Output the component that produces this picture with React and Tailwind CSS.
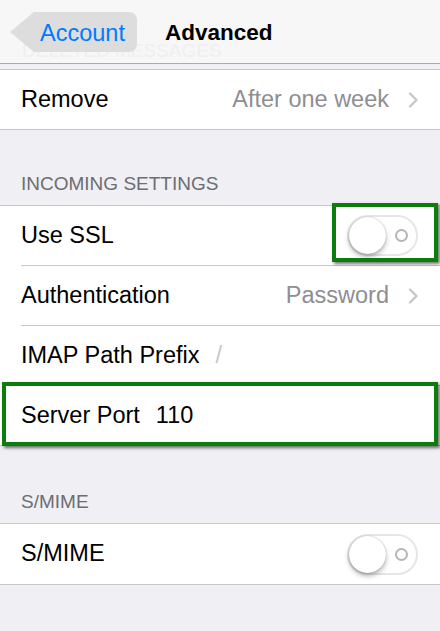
import React from "react";

const Chevron = () => (
  <svg width="10" height="16" viewBox="0 0 10 16" fill="none" className="ml-[19px]">
    <path d="M2 1.5l6.5 6.5L2 14.5" stroke="#c7c7cc" strokeWidth="2.4" strokeLinecap="round" strokeLinejoin="round" />
  </svg>
);

const Toggle = () => (
  <div className="relative w-[71px] h-[41px] rounded-full border-2 border-[#e6e6e6] bg-white">
    <div className="absolute left-0 top-0 w-[37px] h-[37px] rounded-full bg-white shadow-[0_3px_5px_rgba(0,0,0,0.3),0_0_1px_rgba(0,0,0,0.35)]" />
    <div className="absolute right-[8px] top-[12px] w-[13px] h-[13px] rounded-full border-2 border-[#b5b5b5]" />
  </div>
);

const Row = ({ children, last, h = "h-[60px]" }) => (
  <div className={`relative pl-[21px] ${h}`}>
    <div className={`flex items-center h-full pr-[22px] ${last ? "" : "border-b border-[#c8c7cc]"}`}>
      {children}
    </div>
  </div>
);

const Header = ({ children, h }) => (
  <div className={`flex items-end pl-[21px] text-[19px] leading-[22px] text-[#6d6d72] ${h}`}>{children}</div>
);

export default function App() {
  return (
    <div
      className="w-[440px] h-[631px] overflow-hidden bg-[#efeff4] text-[23.5px] text-black"
      style={{ fontFamily: '"Liberation Sans", Arial, sans-serif' }}
    >
      {/* Nav bar */}
      <div className="relative h-[64px] bg-[#f7f7f7] border-b border-[#ababab] overflow-hidden">
        <span className="absolute left-[22px] top-[40px] text-[19px] leading-[22px] text-[#efefef]">DELETED MESSAGES</span>
        <div className="absolute left-[10px] top-[12px] w-[127px] h-[40px]">
          <svg width="127" height="40" viewBox="0 0 127 40" className="absolute inset-0">
            <path d="M0 20L24 0H119a8 8 0 0 1 8 8V32a8 8 0 0 1-8 8H24Z" fill="#dadada" fillOpacity="0.92" />
          </svg>
          <span className="absolute left-[30px] top-[8px] leading-[26px] text-[#007aff]">Account</span>
        </div>
        <span className="absolute left-[165px] top-[20px] text-[22.5px] leading-[26px] font-bold">Advanced</span>
      </div>

      {/* Deleted messages */}
      <div className="mt-[5px] bg-white border-y border-[#c8c7cc]">
        <Row last h="h-[59px]">
          <span>Remove</span>
          <span className="ml-auto text-[#8e8e93]">After one week</span>
          <Chevron />
        </Row>
      </div>

      <Header h="h-[75px] pb-[10px]">INCOMING SETTINGS</Header>

      <div className="bg-white border-y border-[#c8c7cc]">
        <Row>
          <span>Use SSL</span>
          <div className="ml-auto">
            <Toggle />
          </div>
          <div className="absolute right-[2px] top-[-3px] w-[106px] h-[59px] border-4 border-[#0c7d0c] shadow-[2px_2px_3px_rgba(0,0,0,0.55)]" />
        </Row>
        <Row>
          <span>Authentication</span>
          <span className="ml-auto text-[#8e8e93]">Password</span>
          <Chevron />
        </Row>
        <Row>
          <span>IMAP Path Prefix</span>
          <span className="ml-[16px] text-[#c7c7cc]">/</span>
        </Row>
        <Row last h="h-[59px]">
          <span>Server Port</span>
          <span className="ml-[16px]">110</span>
          <div className="absolute left-[2px] right-[2px] top-[-4px] h-[64px] border-4 border-[#0c7d0c] shadow-[2px_2px_3px_rgba(0,0,0,0.55)]" />
        </Row>
      </div>

      <Header h="h-[77px] pb-[10px]">S/MIME</Header>

      <div className="bg-white border-y border-[#c8c7cc]">
        <Row last>
          <span>S/MIME</span>
          <div className="ml-auto">
            <Toggle />
          </div>
        </Row>
      </div>
    </div>
  );
}
